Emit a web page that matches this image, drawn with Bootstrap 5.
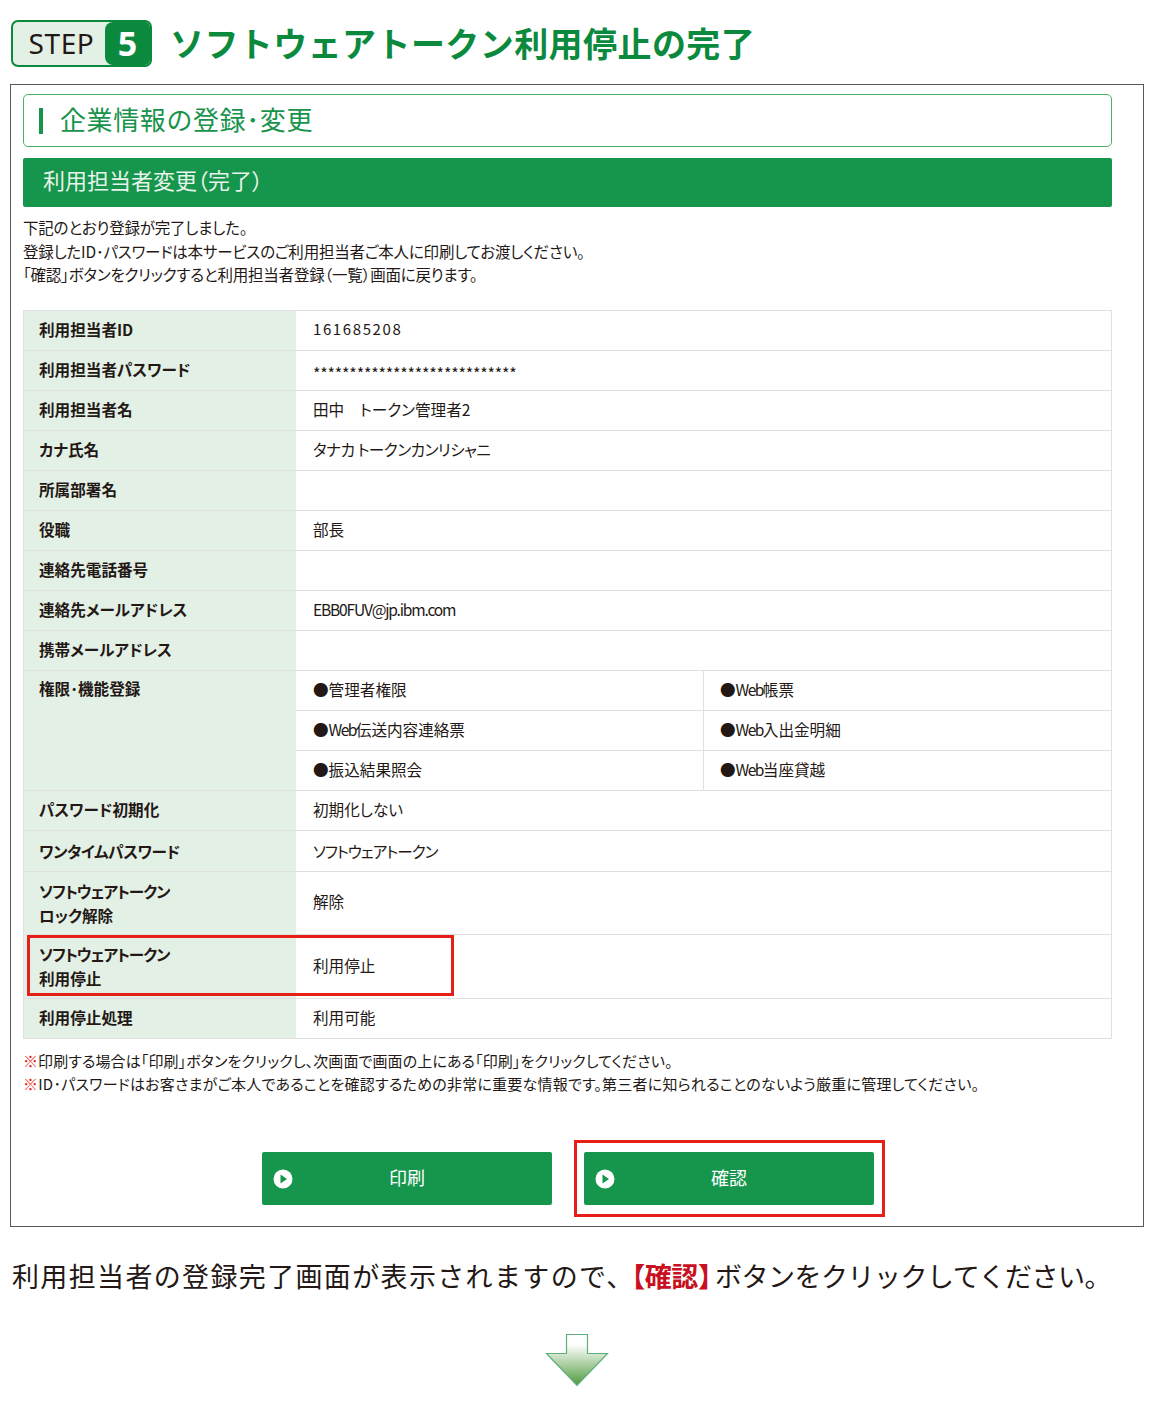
<!DOCTYPE html>
<html lang="ja">
<head>
<meta charset="utf-8">
<title>STEP 5</title>
<link href="https://cdn.jsdelivr.net/npm/bootstrap@5.3.0/dist/css/bootstrap.min.css" rel="stylesheet">
<style>
html,body{background:#fff;}
body{font-family:"Noto Sans CJK JP","Liberation Sans",sans-serif;color:#231815;height:1426px;overflow:hidden;}
.pg{padding:20px 6px 0 10px;}
.stepline{height:47px;margin-bottom:17px;padding-left:1px;}
.stepbadge{width:141px;height:47px;border:2px solid #0b8a3e;border-radius:7px;background:#e3f0e5;overflow:hidden;font-family:"Noto Sans","Liberation Sans",sans-serif;}
.steptxt{width:92px;font-size:28px;line-height:43px;text-align:center;color:#231815;padding-left:5px;letter-spacing:.6px;}
.stepnum{flex:1;background:#0b8a3e;color:#fff;font-size:34px;font-weight:700;line-height:42px;text-align:center;border-radius:8px 0 0 8px;}
.steptitle{font-size:34px;font-weight:700;color:#0b8a3e;margin:-3px 0 0 18px;line-height:47px;white-space:nowrap;letter-spacing:.42px;}
.frame{border:1px solid #595757;height:1143px;padding:9px 31px 0 12px;}
.sechead{height:53px;border:1.5px solid #4fae6c;border-radius:5px;padding-left:15px;color:#18934c;font-size:26px;line-height:46px;margin-bottom:11px;letter-spacing:.6px;}
.secbar{width:4px;height:26px;background:#18934c;margin-right:17px;}
.secttl{margin-top:-4px;}
.greenbar{height:49px;background:#15964c;border-radius:2px;color:#e8f3ea;font-size:22px;line-height:43px;padding-left:20px;margin-bottom:8px;font-feature-settings:"palt";}
.intro{font-size:15.5px;line-height:23.5px;letter-spacing:-.2px;margin-bottom:23px;padding-top:1px;white-space:nowrap;font-feature-settings:"palt";}
.tblwrap{position:relative;}
.infotbl{width:1088px;border-collapse:collapse;table-layout:fixed;font-size:15.6px;border:1px solid #dfe0df;font-feature-settings:"palt";}
.infotbl th,.infotbl td{border-top:1.5px solid #dfe0df;border-bottom:1.5px solid #dfe0df;padding:0 0 3px 15px;height:40px;line-height:24px;vertical-align:middle;font-weight:400;}
.infotbl th{background:#e3f0e5;font-weight:700;}
.infotbl td{padding-left:17.500px;}
.infotbl td+td{border-left:1.5px solid #dfe0df;padding-left:16px;}
.infotbl .tall th,.infotbl .tall td{height:63.500px;}
.infotbl .tall th{padding-bottom:0;}
.infotbl .oneh th,.infotbl .oneh td{height:41px;padding-bottom:0;}
.infotbl .sp{letter-spacing:1.6px;font-size:15px;}
.infotbl .stars{letter-spacing:-.2px;font-size:16px;padding:5px 0 0 17.500px;}
.infotbl .mailv{letter-spacing:-1.2px;}
.infotbl .perm{vertical-align:top;padding-top:5px;}
.wb{letter-spacing:-1.6px;}
.kt{letter-spacing:-1px;}
.kt2{letter-spacing:-.35px;}
.kt3{letter-spacing:-.5px;}
.redbox{position:absolute;left:4px;top:625px;width:427px;height:61px;border:3px solid #e71f19;pointer-events:none;}
.notes{font-size:15px;line-height:23.5px;margin-top:10px;white-space:nowrap;font-feature-settings:"palt";}
.nl1{letter-spacing:.1px;}
.nl2{letter-spacing:.23px;}
.mk{color:#e71f19;}
.btnrow{margin-top:56px;padding-left:239px;gap:32px;}
.greenbtn{width:290px;height:53px;background:#15964c;border:0;border-radius:2px;color:#fff;font-size:18px;padding:0 0 2px;position:relative;}
.greenbtn:hover,.greenbtn:active{background:#15964c;color:#fff;}
.greenbtn svg{position:absolute;left:11px;top:17px;}
.redwrap{position:relative;}
.redwrap::after{content:"";position:absolute;left:-10px;top:-12px;width:311px;height:77px;border:3px solid #e71f19;pointer-events:none;}
.caption{font-size:27px;line-height:40px;margin:29px 0 0 2px;white-space:nowrap;letter-spacing:1.35px;}
.caption b{color:#c8101e;font-weight:700;font-feature-settings:"halt";margin-left:-3px;margin-right:4px;letter-spacing:-.4px;}
.capend{letter-spacing:-.5px;}
.arrowline{margin-top:37px;}
</style>
</head>
<body>
<div class="pg">
  <div class="stepline d-flex align-items-center">
    <div class="stepbadge d-flex"><div class="steptxt">STEP</div><div class="stepnum">5</div></div>
    <h1 class="steptitle">ソフトウェアトークン利用停止の完了</h1>
  </div>
  <div class="frame">
    <div class="sechead d-flex align-items-center"><span class="secbar"></span><span class="secttl">企業情報の登録･変更</span></div>
    <div class="greenbar">利用担当者変更（完了）</div>
    <div class="intro">下記のとおり登録が完了しました。<br>登録したID･パスワードは本サービスのご利用担当者ご本人に印刷してお渡しください。<br>「確認」ボタンをクリックすると利用担当者登録（一覧）画面に戻ります。</div>
    <div class="tblwrap">
      <table class="infotbl">
        <colgroup><col style="width:272px"><col style="width:408px"><col style="width:408px"></colgroup>
        <tr><th>利用担当者ID</th><td colspan="2" class="sp">161685208</td></tr>
        <tr><th>利用担当者パスワード</th><td colspan="2" class="stars">****************************</td></tr>
        <tr><th>利用担当者名</th><td colspan="2">田中　トークン管理者2</td></tr>
        <tr><th>カナ氏名</th><td colspan="2"><span class="kt3">タナカ トークンカンリシャニ</span></td></tr>
        <tr><th>所属部署名</th><td colspan="2"></td></tr>
        <tr><th>役職</th><td colspan="2">部長</td></tr>
        <tr><th>連絡先電話番号</th><td colspan="2"></td></tr>
        <tr><th>連絡先メールアドレス</th><td colspan="2" class="mailv">EBB0FUV@jp.ibm.com</td></tr>
        <tr><th>携帯メールアドレス</th><td colspan="2"></td></tr>
        <tr><th rowspan="3" class="perm">権限･機能登録</th><td>●管理者権限</td><td>●<span class="wb">Web</span>帳票</td></tr>
        <tr><td>●<span class="wb">Web</span>伝送内容連絡票</td><td>●<span class="wb">Web</span>入出金明細</td></tr>
        <tr><td>●振込結果照会</td><td>●<span class="wb">Web</span>当座貸越</td></tr>
        <tr><th>パスワード初期化</th><td colspan="2">初期化しない</td></tr>
        <tr class="oneh"><th><span class="kt2">ワンタイムパスワード</span></th><td colspan="2"><span class="kt">ソフトウェアトークン</span></td></tr>
        <tr class="tall"><th><span class="kt">ソフトウェアトークン</span><br>ロック解除</th><td colspan="2">解除</td></tr>
        <tr class="tall"><th><span class="kt">ソフトウェアトークン</span><br>利用停止</th><td colspan="2">利用停止</td></tr>
        <tr><th>利用停止処理</th><td colspan="2">利用可能</td></tr>
      </table>
      <div class="redbox"></div>
    </div>
    <div class="notes"><span class="nl1"><span class="mk">※</span>印刷する場合は「印刷」ボタンをクリックし、次画面で画面の上にある「印刷」をクリックしてください。</span><br><span class="nl2"><span class="mk">※</span>ID･パスワードはお客さまがご本人であることを確認するための非常に重要な情報です。第三者に知られることのないよう厳重に管理してください。</span></div>
    <div class="btnrow d-flex">
      <button type="button" class="btn greenbtn"><svg width="20" height="20" viewBox="0 0 20 20"><circle cx="10" cy="10" r="9.5" fill="#fff"/><path d="M7.5 5.5 14 10l-6.5 4.5z" fill="#15964c"/></svg>印刷</button>
      <div class="redwrap"><button type="button" class="btn greenbtn"><svg width="20" height="20" viewBox="0 0 20 20"><circle cx="10" cy="10" r="9.5" fill="#fff"/><path d="M7.5 5.5 14 10l-6.5 4.5z" fill="#15964c"/></svg>確認</button></div>
    </div>
  </div>
  <p class="caption">利用担当者の登録完了画面が表示されますので、<b>【確認】</b><span class="capend">ボタンをクリックしてください。</span></p>
  <div class="arrowline d-flex justify-content-center">
    <svg width="66" height="56" viewBox="0 0 66 56"><defs><linearGradient id="ag" x1="0" y1="0" x2="0" y2="1"><stop offset=".2" stop-color="#fff"/><stop offset="1" stop-color="#4f9a3c"/></linearGradient></defs><path d="M22.500 1.500h21v19h20l-30.500 32-30.500-32h20z" fill="url(#ag)" stroke="#5fae7c" stroke-width="1.200"/></svg>
  </div>
</div>
</body>
</html>
